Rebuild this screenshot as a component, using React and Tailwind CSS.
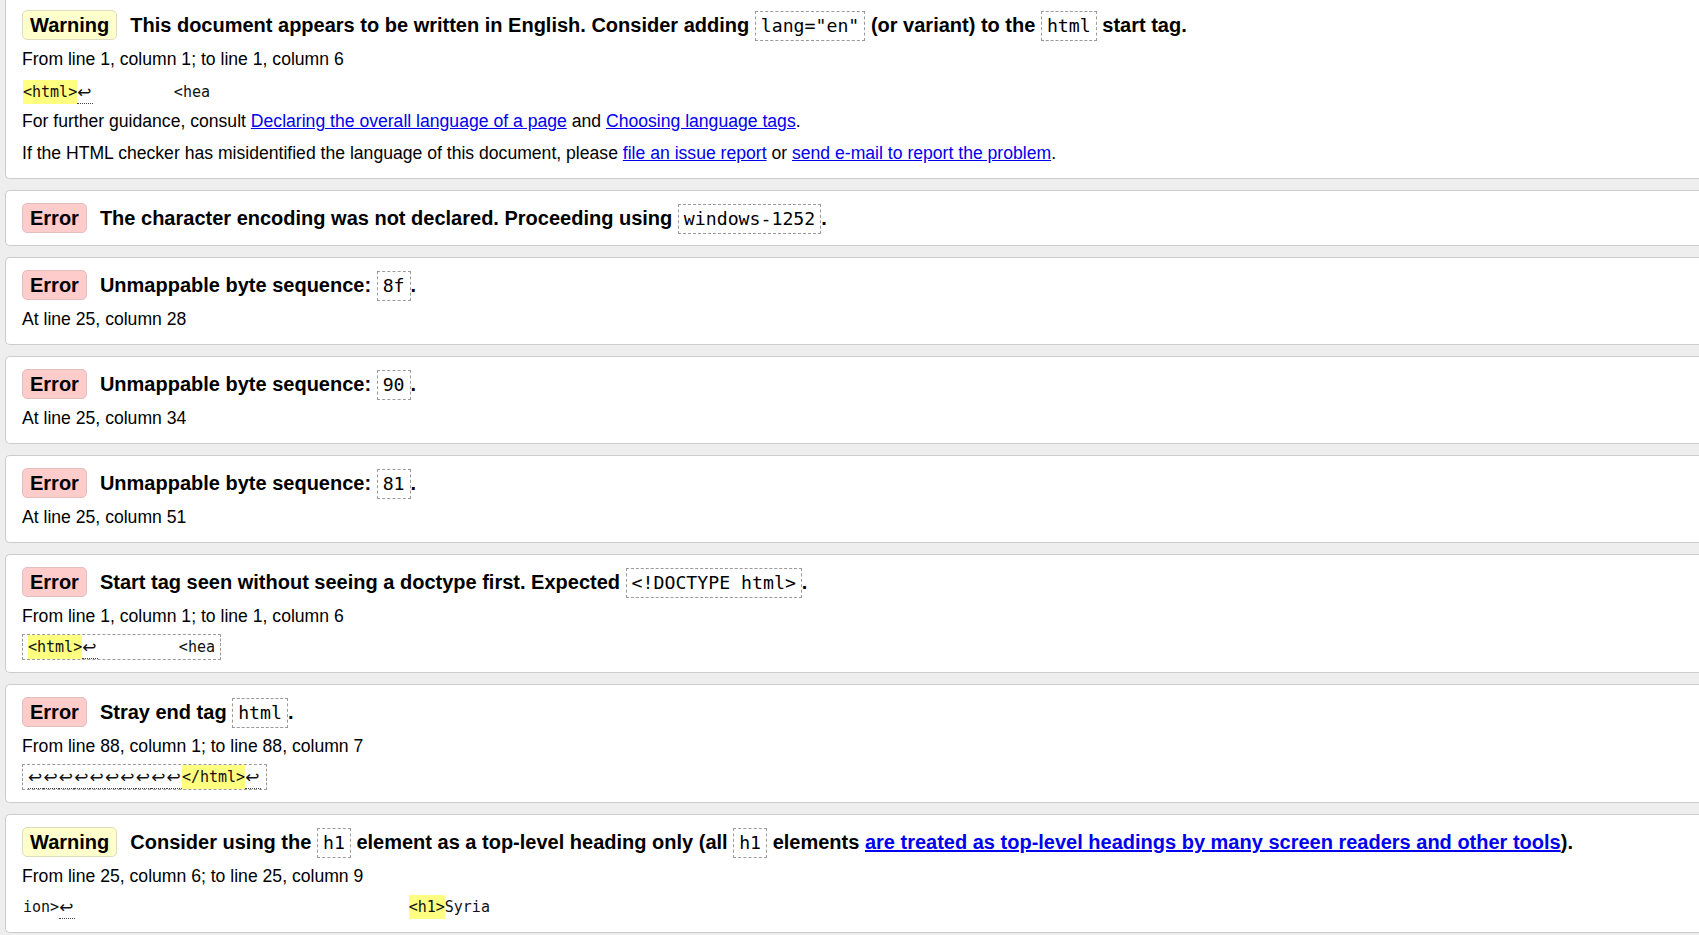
import React from "react";

const MONO = "font-['DejaVu_Sans_Mono',monospace]";

function Badge({ type }) {
  const cls =
    type === "Warning"
      ? "bg-[#ffffcc] border-[#dcdcc0]"
      : "bg-[#ffcccc] border-[#e2c0c0]";
  return (
    <span
      className={`inline-block rounded-[5px] border ${cls} px-[7px] leading-[28px] mr-[13px]`}
    >
      {type}
    </span>
  );
}

function Code({ children }) {
  return (
    <code
      className={`inline-block border border-dashed border-[#9a9a9a] px-[5px] leading-[28px] text-[18.2px] font-normal ${MONO}`}
    >
      {children}
    </code>
  );
}

function Ret() {
  return (
    <span className="inline-block h-[24px] w-[15.4px] overflow-hidden align-top border-b border-dotted border-[#444] text-[17px] leading-[24px] font-['DejaVu_Sans',sans-serif]">
      ↩
    </span>
  );
}

function Hl({ children }) {
  return <span className="inline-block h-[24px] align-top bg-[#ffff80]">{children}</span>;
}

function Extract({ boxed, children, className = "mt-[5px]" }) {
  return (
    <div className={`${className} h-[26px]`}>
      <code
        className={`flex h-[26px] w-fit items-start whitespace-pre leading-[24px] text-[15px] text-[#111] ${MONO} ${
          boxed ? "border border-dashed border-[#9a9a9a] px-[5px]" : "border border-transparent"
        }`}
      >
        {children}
      </code>
    </div>
  );
}

function Detail({ children, className = "" }) {
  return <p className={`mt-[7px] leading-[25px] ${className}`}>{children}</p>;
}

function A({ children, bold }) {
  return (
    <a href="#" className={`text-[#0000ee] underline ${bold ? "font-bold" : ""}`}>
      {children}
    </a>
  );
}

function Card({ children, first }) {
  return (
    <div
      className={`ml-[5px] border border-r-0 border-[#cccccc] bg-white pl-[16px] ${
        first ? "border-t-0 rounded-bl-[5px] pt-[10px] pb-[12px]" : "rounded-l-[5px] pt-[12px] pb-[12px]"
      }`}
    >
      {children}
    </div>
  );
}

function Head({ type, children }) {
  return (
    <div className="h-[30px] whitespace-nowrap leading-[30px] text-[20px] font-bold">
      <Badge type={type} />
      {children}
    </div>
  );
}

function T({ children }) {
  return <span className="whitespace-pre">{children}</span>;
}

export default function App() {
  return (
    <div className="min-h-screen overflow-hidden bg-[#eeeeee] text-[17.6px] text-black font-['Liberation_Sans',Arial,sans-serif]">
      <div className="flex flex-col gap-[11px]">
        <Card first>
          <Head type="Warning">
            This document appears to be written in English. Consider adding <Code>lang="en"</Code> (or variant) to the <Code>html</Code> start tag.
          </Head>
          <Detail>From line 1, column 1; to line 1, column 6</Detail>
          <Extract className="mt-[7px]">
            <Hl>&lt;html&gt;</Hl>
            <Ret />
            <T>{"         <hea"}</T>
          </Extract>
          <p className="mt-[4px] leading-[25px]">
            For further guidance, consult <A>Declaring the overall language of a page</A> and <A>Choosing language tags</A>.
          </p>
          <p className="mt-[7px] leading-[25px]">
            If the HTML checker has misidentified the language of this document, please <A>file an issue report</A> or <A>send e-mail to report the problem</A>.
          </p>
        </Card>

        <Card>
          <Head type="Error">
            The character encoding was not declared. Proceeding using <Code>windows-1252</Code>.
          </Head>
        </Card>

        <Card>
          <Head type="Error">
            Unmappable byte sequence: <Code>8f</Code>.
          </Head>
          <Detail>At line 25, column 28</Detail>
        </Card>

        <Card>
          <Head type="Error">
            Unmappable byte sequence: <Code>90</Code>.
          </Head>
          <Detail>At line 25, column 34</Detail>
        </Card>

        <Card>
          <Head type="Error">
            Unmappable byte sequence: <Code>81</Code>.
          </Head>
          <Detail>At line 25, column 51</Detail>
        </Card>

        <Card>
          <Head type="Error">
            Start tag seen without seeing a doctype first. Expected <Code>&lt;!DOCTYPE html&gt;</Code>.
          </Head>
          <Detail>From line 1, column 1; to line 1, column 6</Detail>
          <Extract boxed>
            <Hl>&lt;html&gt;</Hl>
            <Ret />
            <T>{"         <hea"}</T>
          </Extract>
        </Card>

        <Card>
          <Head type="Error">
            Stray end tag <Code>html</Code>.
          </Head>
          <Detail>From line 88, column 1; to line 88, column 7</Detail>
          <Extract boxed>
            <Ret />
            <Ret />
            <Ret />
            <Ret />
            <Ret />
            <Ret />
            <Ret />
            <Ret />
            <Ret />
            <Ret />
            <Hl>&lt;/html&gt;</Hl>
            <Ret />
          </Extract>
        </Card>

        <Card>
          <Head type="Warning">
            Consider using the <Code>h1</Code> element as a top-level heading only (all <Code>h1</Code> elements{" "}
            <A bold>are treated as top-level headings by many screen readers and other tools</A>).
          </Head>
          <Detail>From line 25, column 6; to line 25, column 9</Detail>
          <Extract>
            <T>{"ion>"}</T>
            <Ret />
            <T>{"                                     "}</T>
            <Hl>&lt;h1&gt;</Hl>
            <T>Syria</T>
          </Extract>
        </Card>
      </div>
    </div>
  );
}
